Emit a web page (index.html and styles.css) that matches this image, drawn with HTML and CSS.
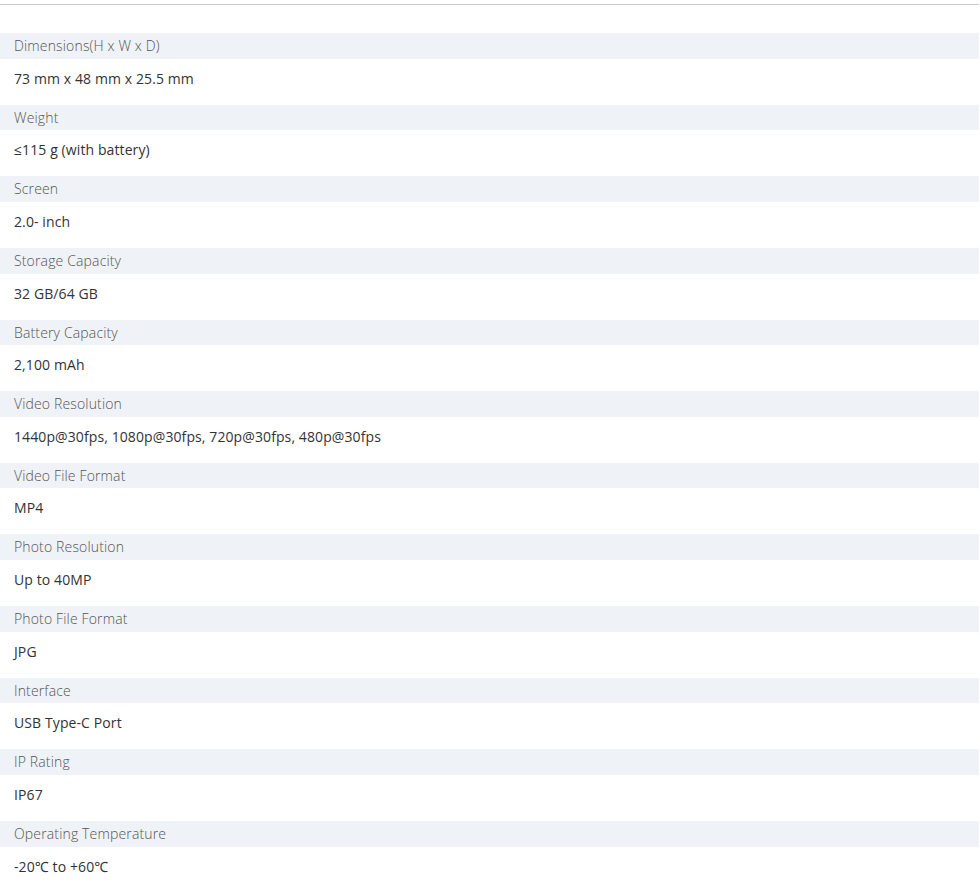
FILE: index.html
```html
<!DOCTYPE html>
<html lang="en">
<head>
    <meta charset="UTF-8">
    <title>Specs</title>
    <link rel="stylesheet" href="styles.css">
</head>
<body>
<div class="specs">
    <dl class="spec-list">
        <dt class="spec-label">Dimensions(H x W x D)</dt>
        <dd class="spec-value">73 mm x 48 mm x 25.5 mm</dd>

        <dt class="spec-label">Weight</dt>
        <dd class="spec-value">≤115 g (with battery)</dd>

        <dt class="spec-label">Screen</dt>
        <dd class="spec-value">2.0- inch</dd>

        <dt class="spec-label">Storage Capacity</dt>
        <dd class="spec-value">32 GB/64 GB</dd>

        <dt class="spec-label">Battery Capacity</dt>
        <dd class="spec-value">2,100 mAh</dd>

        <dt class="spec-label">Video Resolution</dt>
        <dd class="spec-value">1440p@30fps, 1080p@30fps, 720p@30fps, 480p@30fps</dd>

        <dt class="spec-label">Video File Format</dt>
        <dd class="spec-value">MP4</dd>

        <dt class="spec-label">Photo Resolution</dt>
        <dd class="spec-value">Up to 40MP</dd>

        <dt class="spec-label">Photo File Format</dt>
        <dd class="spec-value">JPG</dd>

        <dt class="spec-label">Interface</dt>
        <dd class="spec-value">USB Type-C Port</dd>

        <dt class="spec-label">IP Rating</dt>
        <dd class="spec-value">IP67</dd>

        <dt class="spec-label">Operating Temperature</dt>
        <dd class="spec-value">-20℃ to +60℃</dd>
    </dl>
</div>
</body>
</html>
```
FILE: styles.css
```css
* {
    margin: 0;
    padding: 0;
    box-sizing: border-box;
}

body {
    font-family: "Open Sans", "Noto Sans", Arial, sans-serif;
    background-color: #fff;
    color: #333;
}

.specs {
    margin-top: 4px;
    width: 979px;
    border-top: 1px solid #c9c9c9;
    padding-top: 28px;
}

.spec-list {
    display: flex;
    flex-direction: column;
}

/* grey band with the name of the spec */
.spec-label {
    height: 25.64px;
    line-height: 24px;
    padding: 1px 14px 0;
    background-color: #eff2f6;
    color: #555;
    font-size: 14px;
    font-weight: 300;
    letter-spacing: 0.15px;
}

.spec-value {
    height: 46px;
    padding: 10px 14px 0;
    line-height: 20px;
    color: #333;
    font-size: 14px;
    letter-spacing: 0.1px;
}
```
